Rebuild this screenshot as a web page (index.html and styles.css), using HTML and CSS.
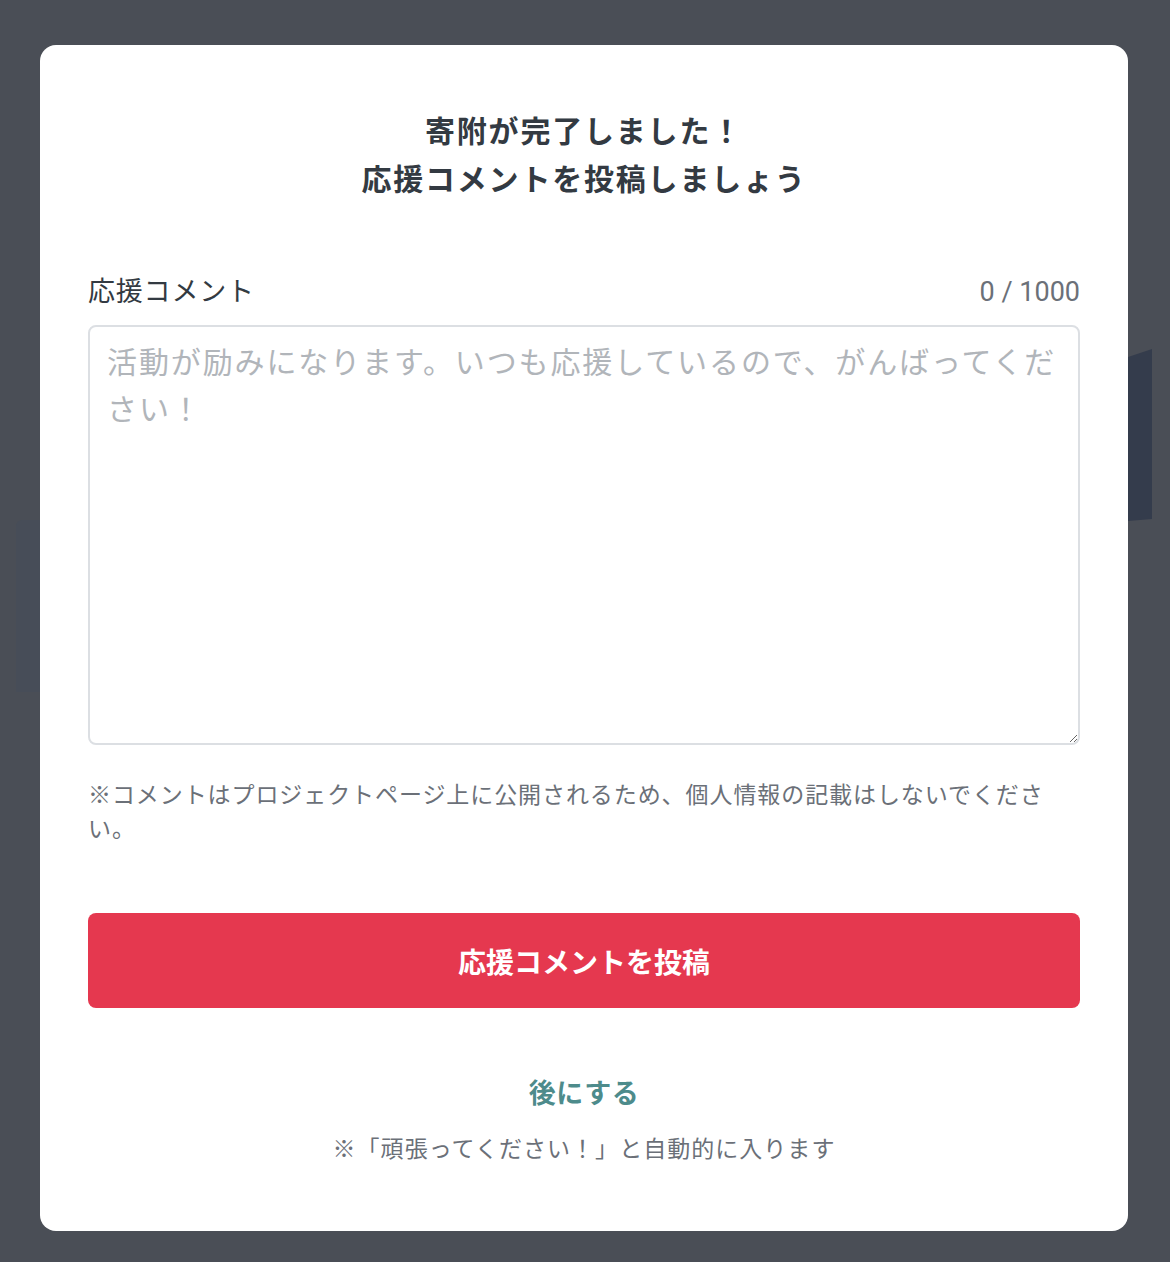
FILE: index.html
```html
<!doctype html>
<html lang="ja">
<head>
  <meta charset="UTF-8">
  <meta name="viewport" content="width=device-width, initial-scale=1.0">
  <title>応援コメント</title>
  <link rel="stylesheet" href="styles.css">
</head>
<body>
  <div class="backdrop">
    <div class="bg-shape bg-shape-right"></div>
    <div class="bg-shape bg-shape-left"></div>
    <div class="modal">
      <h1 class="modal-title">寄附が完了しました！<br>応援コメントを投稿しましょう</h1>
      <div class="field-head">
        <label class="field-label" for="comment">応援コメント</label>
        <span class="field-count">0 / 1000</span>
      </div>
      <textarea id="comment" class="field-input" placeholder="活動が励みになります。いつも応援しているので、がんばってください！"></textarea>
      <p class="field-note">※コメントはプロジェクトページ上に公開されるため、個人情報の記載はしないでください。</p>
      <button class="btn-submit" type="button">応援コメントを投稿</button>
      <a href="#" class="btn-later">後にする</a>
      <p class="later-note">※「頑張ってください！」と自動的に入ります</p>
    </div>
  </div>
</body>
</html>
```

FILE: styles.css
```css
* {
  box-sizing: border-box;
}
html, body {
  margin: 0;
  height: 100%;
}
body {
  background-color: #4a4e56;
  font-family: "Noto Sans CJK JP", "Noto Sans", sans-serif;
  color: #333a42;
}
.backdrop {
  position: relative;
  min-height: 100%;
  padding: 45px 40px 31px;
}
.bg-shape {
  position: absolute;
}
.bg-shape-right {
  left: 1128px;
  top: 349px;
  width: 24px;
  height: 172px;
  background-color: #343c4c;
  clip-path: polygon(0 8px, 100% 0, 100% 170px, 0 172px);
}
.bg-shape-left {
  left: 16px;
  top: 520px;
  width: 30px;
  height: 172px;
  border-radius: 6px 0 0 0;
  background-color: #474d58;
}
.modal {
  position: relative;
  display: flex;
  flex-direction: column;
  width: 1088px;
  height: 1186px;
  padding: 60px 48px 0;
  background-color: #fff;
  border-radius: 16px;
}
.modal-title {
  margin: 0;
  font-size: 30px;
  font-weight: bold;
  line-height: 48px;
  letter-spacing: 0.06em;
  text-align: center;
  color: #333a42;
}
.field-head {
  display: flex;
  justify-content: space-between;
  align-items: center;
  margin-top: 68px;
  height: 40px;
}
.field-label {
  font-size: 27px;
  letter-spacing: 0.03em;
  color: #333a42;
}
.field-count {
  font-family: Roboto, "Noto Sans", sans-serif;
  font-size: 27px;
  color: #6b7078;
  padding-top: 6px;
}
.field-input {
  display: block;
  width: 100%;
  height: 420px;
  margin-top: 16px;
  padding: 10px 10px 10px 17px;
  border: 2px solid #dcdfe3;
  border-radius: 8px;
  font-family: inherit;
  font-size: 30px;
  line-height: 47px;
  letter-spacing: 0.063em;
  color: #333a42;
  resize: vertical;
  outline: none;
}
.field-input::placeholder {
  color: #b1b5ba;
}
.field-note {
  margin: 31px 0 0;
  font-size: 23px;
  line-height: 34px;
  letter-spacing: 0.04em;
  color: #6b7078;
}
.btn-submit {
  display: block;
  width: 100%;
  height: 95px;
  margin-top: 69px;
  border: 0;
  border-radius: 8px;
  background-color: #e5384f;
  font-family: inherit;
  font-size: 28px;
  font-weight: bold;
  color: #fff;
  cursor: pointer;
}
.btn-later {
  display: block;
  margin-top: 64px;
  font-size: 27px;
  font-weight: bold;
  line-height: 40px;
  letter-spacing: 0.02em;
  text-align: center;
  text-decoration: none;
  color: #4d8b8b;
}
.later-note {
  margin: 18px 0 0;
  font-size: 23px;
  line-height: 34px;
  letter-spacing: 0.045em;
  text-align: center;
  color: #6b7078;
}
```
